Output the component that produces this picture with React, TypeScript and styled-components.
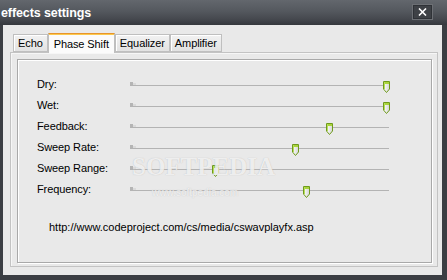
import React from "react";
import styled, { createGlobalStyle } from "styled-components";

const Global = createGlobalStyle`
  html, body { margin: 0; padding: 0; background: #3a3d42; }
  body { font-family: "Liberation Sans", Arial, sans-serif; }
`;

const Window = styled.div`
  width: 447px;
  height: 280px;
  display: flex;
  flex-direction: column;
  background: #3b3e43;
  box-sizing: border-box;
  overflow: hidden;
  position: relative;
`;

const TitleBar = styled.div`
  height: 25px;
  flex: none;
  display: flex;
  align-items: center;
  justify-content: space-between;
  padding: 0 14px 0 1px;
  background: linear-gradient(#63676d 0%, #54585e 45%, #46494f 75%, #35383d 100%);
`;

const Title = styled.div`
  color: #ffffff;
  font-weight: bold;
  font-size: 12.5px;
  letter-spacing: -0.1px;
  margin-top: 1px;
`;

const CloseButton = styled.div`
  width: 19px;
  height: 14px;
  margin-top: -1px;
  display: flex;
  align-items: center;
  justify-content: center;
  background: #3e4146;
  border: 1px solid #6c6f74;
  box-shadow: inset 0 0 0 1px #2f3237;
`;

const Client = styled.div`
  flex: 1;
  margin: 0 5px 5px 3px;
  background: #e9e9e9;
  padding: 8px 4px 0 7px;
  display: flex;
  flex-direction: column;
`;

const TabStrip = styled.div`
  display: flex;
  align-items: flex-end;
  padding-left: 3px;
  height: 20px;
  margin-bottom: -1px;
  position: relative;
  z-index: 1;
`;

const Tab = styled.div<{ $active?: boolean }>`
  box-sizing: border-box;
  height: ${(p) => (p.$active ? "20px" : "18px")};
  padding: 0 ${(p) => (p.$active ? "5px" : "4px")};
  margin: ${(p) => (p.$active ? "0" : "0 0 1px 0")};
  display: flex;
  align-items: center;
  font-size: 11px;
  letter-spacing: -0.1px;
  color: #000;
  border: 1px solid #bfbfbf;
  border-bottom: ${(p) => (p.$active ? "none" : "1px solid #bfbfbf")};
  border-top: 1px solid ${(p) => (p.$active ? "#e8952a" : "#bfbfbf")};
  background: ${(p) => (p.$active ? "#fbfbfb" : "linear-gradient(#f2f2f2, #e2e2e2)")};
  box-shadow: ${(p) =>
    p.$active ? "inset 0 1px 0 #fbc94e" : "inset 1px 1px 0 #ffffff"};
`;

const Pane = styled.div`
  width: 428px;
  height: 215px;
  box-sizing: border-box;
  border: 1px solid #c3c3c3;
  box-shadow: inset 1px 1px 0 #f6f6f6;
  padding: 6px 5px 3px 6px;
  display: flex;
`;

const Group = styled.div`
  flex: 1;
  border: 1px solid #a9a9a9;
  box-shadow: inset 1px 1px 0 #ffffff, 1px 1px 0 #ffffff;
  padding: 13px 40px 0 19px;
  position: relative;
`;

const Row = styled.div`
  display: grid;
  grid-template-columns: 93px 1fr;
  height: 21px;
  align-items: center;
`;

const Label = styled.div`
  font-size: 11px;
  color: #000;
  letter-spacing: -0.1px;
`;

const Slider = styled.div`
  position: relative;
  height: 21px;
  width: 259px;
`;

const Track = styled.div`
  position: absolute;
  left: 0;
  right: 0;
  top: 12px;
  height: 1px;
  background: #b3b3b3;
  &::before {
    content: "";
    position: absolute;
    left: 0;
    top: -3px;
    width: 3px;
    height: 3px;
    background: #b5b5b5;
  }
  &::after {
    content: "";
    position: absolute;
    left: 3px;
    top: -2px;
    width: 3px;
    height: 2px;
    background: #dadada;
  }
`;

const ThumbWrap = styled.div`
  position: absolute;
  top: 6px;
  width: 7px;
  height: 12px;
`;

const Url = styled.div`
  margin-top: 22px;
  padding-left: 12px;
  font-size: 11px;
  letter-spacing: 0px;
  color: #000;
`;

const Watermark = styled.div`
  position: absolute;
  left: 114px;
  top: 94px;
  font-family: "Liberation Serif", "Times New Roman", serif;
  font-size: 25px;
  font-weight: bold;
  letter-spacing: 0px;
  color: rgba(255, 255, 255, 0.75);
  text-shadow: 0 0 1px rgba(150, 150, 150, 0.6);
  pointer-events: none;
  line-height: 1;
  & small {
    display: block;
    font-family: "Liberation Sans", Arial, sans-serif;
    font-weight: normal;
    font-size: 10px;
    letter-spacing: 0;
    margin: 9px 0 0 20px;
    color: rgba(255, 255, 255, 0.75);
    text-shadow: 0 0 1px rgba(150, 150, 150, 0.5);
  }
`;

const Thumb = () => (
  <svg width="7" height="12" viewBox="0 0 7 12">
    <defs>
      <linearGradient id="tb" x1="0" x2="1" y1="0" y2="0">
        <stop offset="0" stopColor="#ffffff" />
        <stop offset="1" stopColor="#d4d4d4" />
      </linearGradient>
    </defs>
    <path d="M0.5 0.5 H6.5 V8 L3.5 11.5 L0.5 8 Z" fill="url(#tb)" stroke="#6f9a1c" strokeWidth="1" />
    <rect x="1" y="1" width="5" height="2" fill="#a9d43b" />
    <rect x="1" y="1" width="1" height="7" fill="#b7de58" />
  </svg>
);

const sliders = [
  { label: "Dry:", value: 100 },
  { label: "Wet:", value: 100 },
  { label: "Feedback:", value: 77.5 },
  { label: "Sweep Rate:", value: 64 },
  { label: "Sweep Range:", value: 32.4 },
  { label: "Frequency:", value: 68.4 },
];

export default function App() {
  return (
    <>
      <Global />
      <Window>
        <TitleBar>
          <Title>effects settings</Title>
          <CloseButton>
            <svg width="9" height="8" viewBox="0 0 9 8">
              <path d="M1 0.5 L8 7.5 M8 0.5 L1 7.5" stroke="#ffffff" strokeWidth="1.6" />
            </svg>
          </CloseButton>
        </TitleBar>
        <Client>
          <TabStrip>
            <Tab>Echo</Tab>
            <Tab $active>Phase Shift</Tab>
            <Tab>Equalizer</Tab>
            <Tab>Amplifier</Tab>
          </TabStrip>
          <Pane>
            <Group>
              {sliders.map((s) => (
                <Row key={s.label}>
                  <Label>{s.label}</Label>
                  <Slider>
                    <Track />
                    <ThumbWrap style={{ left: `${(s.value / 100) * 253}px` }}>
                      <Thumb />
                    </ThumbWrap>
                  </Slider>
                </Row>
              ))}
              <Url>http://www.codeproject.com/cs/media/cswavplayfx.asp</Url>
              <Watermark>
                SOFTPEDIA
                <small>www.softpedia.com</small>
              </Watermark>
            </Group>
          </Pane>
        </Client>
      </Window>
    </>
  );
}
